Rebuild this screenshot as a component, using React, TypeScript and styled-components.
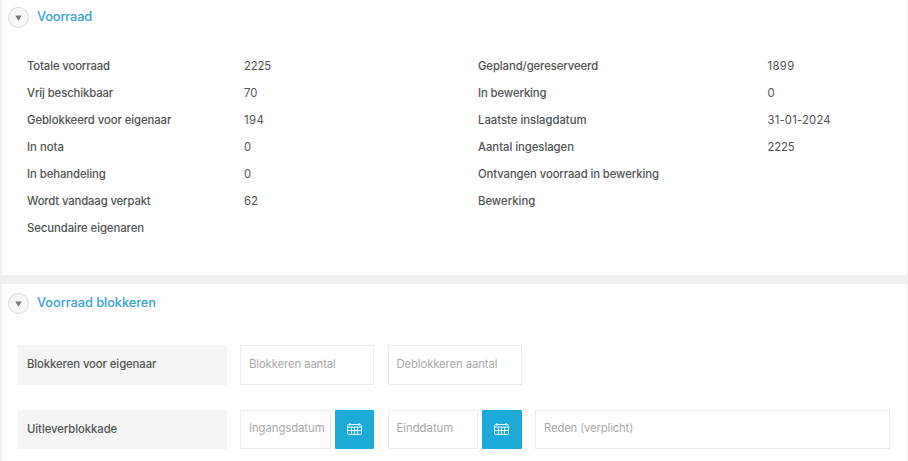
import React from "react";
import styled, { createGlobalStyle } from "styled-components";

const Global = createGlobalStyle`
  *, *::before, *::after { box-sizing: border-box; }
  body {
    margin: 0;
    background: #efefef;
    color: #505352;
    font-family: Inter, "Liberation Sans", sans-serif;
    font-size: 11.3px;
  }
`;

const Page = styled.main`
  display: flex;
  flex-direction: column;
  gap: 9px;
  height: 461px;
  padding: 0 1px 0 2px;
  overflow: hidden;
`;

const Panel = styled.section<{ $height: number; $top: number }>`
  flex: none;
  height: ${(p) => p.$height}px;
  padding-top: ${(p) => p.$top}px;
  background: #fefefe;
`;

const Header = styled.header`
  display: flex;
  align-items: center;
  gap: 8px;
  height: 21px;
  padding-left: 6px;
`;

const Toggle = styled.button`
  display: flex;
  align-items: center;
  justify-content: center;
  width: 21px;
  height: 21px;
  padding: 0;
  border: 1px solid #d9d9d9;
  border-radius: 50%;
  background: #f7f7f7;
`;

const Title = styled.h2<{ $spacing: number }>`
  margin: 0 0 2px;
  color: #35a3cd;
  font-size: 12.8px;
  font-weight: 500;
  line-height: 18px;
  letter-spacing: ${(p) => p.$spacing}px;
`;

const Columns = styled.div`
  display: grid;
  grid-template-columns: 451px 1fr;
  padding: 25px 0 0 25px;
`;

const Facts = styled.dl<{ $labelWidth: number }>`
  display: grid;
  grid-template-columns: ${(p) => p.$labelWidth}px 1fr;
  grid-auto-rows: 26.9px;
  align-content: start;
  align-items: center;
  margin: 0;
`;

const Term = styled.dt<{ $spacing: number }>`
  font-weight: 500;
  letter-spacing: ${(p) => p.$spacing}px;
  white-space: nowrap;
`;

const Value = styled.dd<{ $spacing: number }>`
  margin: 0;
  letter-spacing: ${(p) => p.$spacing}px;
`;

const Form = styled.div`
  display: flex;
  flex-direction: column;
  gap: 25px;
  padding: 31px 16px 0;
`;

const FormRow = styled.div`
  display: grid;
  grid-template-columns: 208.5px 134px 134px 355px;
  column-gap: 13.5px;
  height: 39.5px;
`;

const FieldLabel = styled.label<{ $spacing: number }>`
  display: flex;
  align-items: center;
  padding: 0 9px 1px;
  background: #f5f5f5;
  font-weight: 500;
  letter-spacing: ${(p) => p.$spacing}px;
`;

const Input = styled.input<{ $spacing: number }>`
  flex: 1;
  min-width: 0;
  height: 39.5px;
  padding: 0 0 2px 8px;
  border: 1px solid #ebebeb;
  border-radius: 0;
  background: #fff;
  color: #505352;
  font: 400 11.3px Inter, "Liberation Sans", sans-serif;
  letter-spacing: ${(p) => p.$spacing}px;
  &::placeholder { color: #a8a8a8; opacity: 1; }
`;

const DateField = styled.div`
  display: flex;
  gap: 4px;
`;

const DateButton = styled.button`
  display: flex;
  align-items: center;
  justify-content: center;
  width: 39.5px;
  height: 39.5px;
  padding: 0;
  border: 0;
  border-radius: 1px;
  background: #1caad9;
`;

const Arrow = () => (
  <svg width="7" height="6" viewBox="0 0 7 6">
    <path d="M0.3 0.5H6.7L3.5 5.8Z" fill="#777" />
  </svg>
);

const CalendarIcon = () => (
  <svg width="15" height="12" viewBox="0 0 15 12" fill="none" stroke="#e9f9ff">
    <rect x="0.6" y="1.5" width="13.8" height="9.9" rx="1" />
    <path d="M1 4.1H14M1 7.5H14M4.5 4V11M7.5 4V11M10.5 4V11" />
    <path d="M3 0V2.4M12 0V2.4" strokeWidth="1.2" />
  </svg>
);

interface Fact {
  label: string;
  value?: string;
  spacing?: number;
  valueSpacing?: number;
}

const leftFacts: Fact[] = [
  { label: "Totale voorraad", value: "2225", spacing: -0.12, valueSpacing: -0.1 },
  { label: "Vrij beschikbaar", value: "70", spacing: -0.1 },
  { label: "Geblokkeerd voor eigenaar", value: "194", spacing: -0.07, valueSpacing: 0.4 },
  { label: "In nota", value: "0" },
  { label: "In behandeling", value: "0", spacing: -0.06 },
  { label: "Wordt vandaag verpakt", value: "62", spacing: -0.13 },
  { label: "Secundaire eigenaren", spacing: -0.05 },
];

const rightFacts: Fact[] = [
  { label: "Gepland/gereserveerd", value: "1899", spacing: -0.08, valueSpacing: 0.35 },
  { label: "In bewerking", value: "0", spacing: -0.1 },
  { label: "Laatste inslagdatum", value: "31-01-2024", valueSpacing: 0.2 },
  { label: "Aantal ingeslagen", value: "2225", spacing: -0.03, valueSpacing: -0.1 },
  { label: "Ontvangen voorraad in bewerking", spacing: -0.09 },
  { label: "Bewerking" },
];

const FactList = ({ facts, labelWidth }: { facts: Fact[]; labelWidth: number }) => (
  <Facts $labelWidth={labelWidth}>
    {facts.map((fact) => (
      <React.Fragment key={fact.label}>
        <Term $spacing={fact.spacing ?? 0}>{fact.label}</Term>
        <Value $spacing={fact.valueSpacing ?? 0}>{fact.value}</Value>
      </React.Fragment>
    ))}
  </Facts>
);

const PanelHeader = ({ title, spacing }: { title: string; spacing: number }) => (
  <Header>
    <Toggle aria-label={title}><Arrow /></Toggle>
    <Title $spacing={spacing}>{title}</Title>
  </Header>
);

const DateInput = ({ label, spacing }: { label: string; spacing: number }) => (
  <DateField>
    <Input placeholder={label} $spacing={spacing} />
    <DateButton aria-label={label}><CalendarIcon /></DateButton>
  </DateField>
);

export default function App() {
  return (
    <>
      <Global />
      <Page>
        <Panel $height={275} $top={7}>
          <PanelHeader title="Voorraad" spacing={-0.15} />
          <Columns>
            <FactList facts={leftFacts} labelWidth={217} />
            <FactList facts={rightFacts} labelWidth={289.5} />
          </Columns>
        </Panel>
        <Panel $height={177} $top={9}>
          <PanelHeader title="Voorraad blokkeren" spacing={-0.06} />
          <Form>
            <FormRow>
              <FieldLabel $spacing={-0.08}>Blokkeren voor eigenaar</FieldLabel>
              <Input placeholder="Blokkeren aantal" $spacing={-0.1} />
              <Input placeholder="Deblokkeren aantal" $spacing={-0.1} />
            </FormRow>
            <FormRow>
              <FieldLabel $spacing={-0.06}>Uitleverblokkade</FieldLabel>
              <DateInput label="Ingangsdatum" spacing={-0.05} />
              <DateInput label="Einddatum" spacing={0} />
              <Input placeholder="Reden (verplicht)" $spacing={-0.15} />
            </FormRow>
          </Form>
        </Panel>
      </Page>
    </>
  );
}
